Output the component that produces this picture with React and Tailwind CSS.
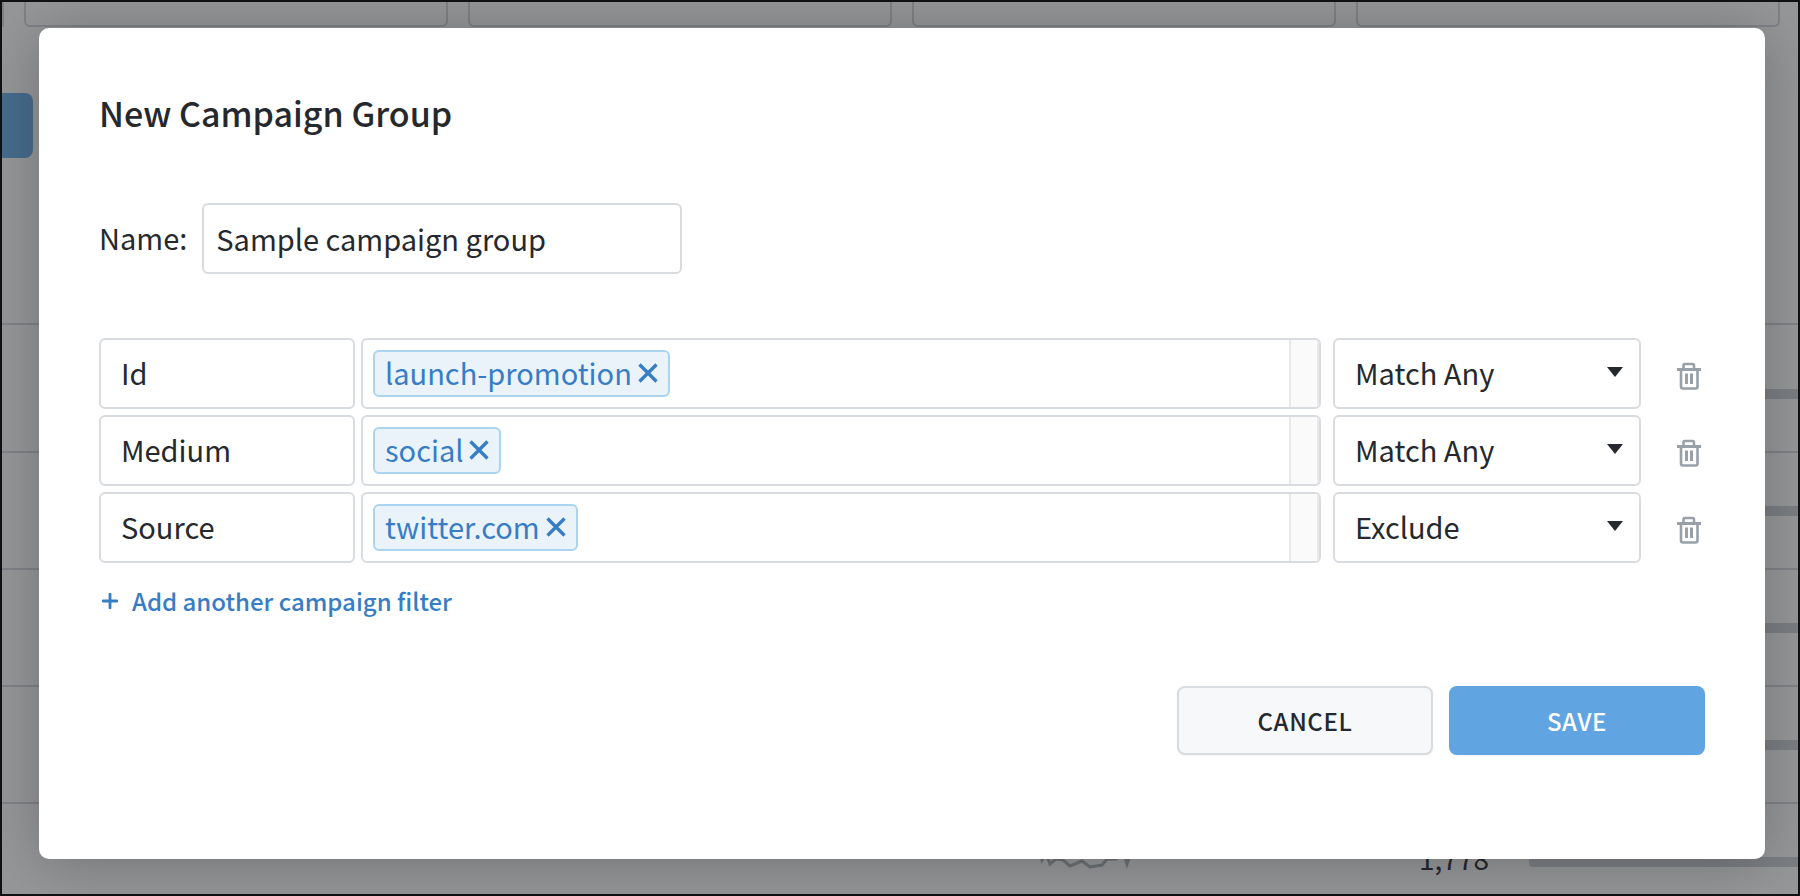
import React, { useState } from 'react';

const INITIAL_FILTERS = [
    { id: 1, field: 'Id', tags: ['launch-promotion'], match: 'Match Any' },
    { id: 2, field: 'Medium', tags: ['social'], match: 'Match Any' },
    { id: 3, field: 'Source', tags: ['twitter.com'], match: 'Exclude' }
];

const MATCH_OPTIONS = ['Match Any', 'Match All', 'Exclude'];

function CloseIcon() {
    return (
        <svg width="20" height="20" viewBox="0 0 20 20" fill="none" stroke="currentColor" strokeWidth="3.3" aria-hidden="true">
            <path d="M1.5 1.5 18.5 18.5M18.5 1.5 1.5 18.5" />
        </svg>
    );
}

function PlusIcon() {
    return (
        <svg width="16" height="16" viewBox="0 0 16 16" fill="none" stroke="currentColor" strokeWidth="2.8" strokeLinecap="round" aria-hidden="true">
            <path d="M8 1V15M1 8H15" />
        </svg>
    );
}

function TrashIcon() {
    return (
        <svg width="24" height="28" viewBox="0 0 24 28" fill="none" stroke="currentColor" strokeWidth="2.6" aria-hidden="true">
            <path d="M0 7.5H24" strokeWidth="3" />
            <path d="M6.5 7V3.5Q6.5 2 8 2H15.5Q17 2 17 3.5V7" />
            <path d="M4 7V24.5Q4 26.5 6 26.5H18.5Q20.5 26.5 20.5 24.5V7" />
            <path d="M9.5 11.5V22M14.5 11.5V22" strokeWidth="3" />
        </svg>
    );
}

// Dimmed report page behind the dialog
function ReportBackdrop() {
    return (
        <div aria-hidden="true" className="col-start-1 row-start-1 flex h-0 min-h-full flex-col overflow-hidden">
            <div className="-mr-1 flex shrink-0 gap-5">
                <div className="h-[25px] w-0.5 border-r-2 border-[#808287]" />
                <div className="grid h-[25px] flex-1 grid-cols-4 gap-5 pr-[22px]">
                    {[0, 1, 2, 3].map(i => (
                        <div key={i} className="rounded-b-md border-2 border-t-0 border-[#808287]" />
                    ))}
                </div>
            </div>
            <div className="mt-[66px] h-[65px] w-[31px] shrink-0 rounded-r-lg bg-[#476c8d]" />
            <div className="mt-[165px] flex shrink-0 flex-col">
                {[0, 1, 2, 3, 4].map(i => (
                    <div
                        key={i}
                        className="flex h-[117px] items-center justify-end border-t-2 border-[#808287] first:h-[128px] first:pt-[11px]"
                    >
                        {i === 4 && (
                            <>
                                <svg width="92" height="24" viewBox="0 0 92 24" fill="none" stroke="#6b7173" strokeWidth="3" className="mr-[287px]">
                                    <path d="M0 2 2 10 6 3 10 14 16 9 23 10 30 16 42 11 50 17 62 15 67 9 76 9 83 1 87 14 92 0" />
                                </svg>
                                <span className="mr-10 pb-2 text-[28px] leading-9">1,778</span>
                            </>
                        )}
                        <div className="h-2.5 w-[269px] rounded-l-sm bg-[#7b7f84]" />
                    </div>
                ))}
            </div>
        </div>
    );
}

function Tag({ label, onRemove }) {
    return (
        <span className="flex h-[47px] items-center gap-1.5 rounded-md border-2 border-[#aad4f2] bg-[#ebf3fa] px-2.5 pb-0.5 text-[#377dc6]">
            {label}
            <button type="button" onClick={onRemove} aria-label={`Remove ${label}`} className="cursor-pointer">
                <CloseIcon />
            </button>
        </span>
    );
}

function FilterRow({ filter, onChange, onRemove }) {
    const removeTag = (tag) => onChange({ ...filter, tags: filter.tags.filter(t => t !== tag) });

    return (
        <div className="flex h-[71px]">
            <input
                type="text"
                aria-label="Field"
                value={filter.field}
                onChange={e => onChange({ ...filter, field: e.target.value })}
                className="w-64 rounded-md border-2 border-[#d8dce1] pb-0.5 pl-5 outline-none"
            />
            <div className="ml-1.5 flex min-w-0 flex-1 overflow-hidden rounded-md border-2 border-[#d8dce1]">
                <div className="flex min-w-0 flex-1 items-center gap-2 pl-2.5">
                    {filter.tags.map(tag => (
                        <Tag key={tag} label={tag} onRemove={() => removeTag(tag)} />
                    ))}
                    <input type="text" aria-label={`${filter.field} values`} className="min-w-0 flex-1 outline-none" />
                </div>
                <div className="w-[30px] border-x-2 border-[#e8e8e8] bg-[#fafafa]" />
            </div>
            <div className="ml-3 grid w-[308px] items-center">
                <select
                    aria-label={`${filter.field} match`}
                    value={filter.match}
                    onChange={e => onChange({ ...filter, match: e.target.value })}
                    className="col-start-1 row-start-1 h-full w-full appearance-none rounded-md border-2 border-[#d8dce1] bg-white pb-0.5 pl-5 outline-none"
                >
                    {MATCH_OPTIONS.map(option => (
                        <option key={option}>{option}</option>
                    ))}
                </select>
                <svg width="16" height="10" viewBox="0 0 16 10" fill="currentColor" aria-hidden="true" className="pointer-events-none col-start-1 row-start-1 mr-[18px] mb-1 justify-self-end">
                    <path d="M0 0H16L8 10Z" />
                </svg>
            </div>
            <button
                type="button"
                onClick={onRemove}
                aria-label={`Delete ${filter.field} filter`}
                className="flex w-16 cursor-pointer items-center justify-end pt-1 pr-1 text-[#98a0a8]"
            >
                <TrashIcon />
            </button>
        </div>
    );
}

export default function App() {
    const [name, setName] = useState('Sample campaign group');
    const [filters, setFilters] = useState(INITIAL_FILTERS);

    const updateFilter = (next) => setFilters(filters.map(f => (f.id === next.id ? next : f)));
    const removeFilter = (id) => setFilters(filters.filter(f => f.id !== id));
    const addFilter = () => setFilters([...filters, { id: Date.now(), field: '', tags: [], match: 'Match Any' }]);

    return (
        <div className="grid min-h-screen overflow-hidden border-2 border-[#101112] bg-[#969799] font-['Noto_Sans_CJK_JP',sans-serif] text-[29px] text-[#25282d]">
            <ReportBackdrop />

            <div
                role="dialog"
                aria-labelledby="dialog-title"
                className="z-10 col-start-1 row-start-1 mt-[26px] mr-[33px] mb-[35px] ml-[37px] rounded-[10px] bg-white px-[60px] pt-15 shadow-[0_4px_60px_rgba(0,0,0,0.25)]"
            >
                <h1 id="dialog-title" className="text-[34px] leading-[49px] font-medium">New Campaign Group</h1>

                <div className="mt-[66px] flex items-center gap-[15px]">
                    <label htmlFor="group-name" className="pb-0.5">Name:</label>
                    <input
                        id="group-name"
                        type="text"
                        value={name}
                        onChange={e => setName(e.target.value)}
                        className="h-[71px] w-[480px] rounded-md border-2 border-[#d8dce1] px-3 pb-0.5 outline-none"
                    />
                </div>

                <div className="mt-16 flex flex-col gap-1.5">
                    {filters.map(filter => (
                        <FilterRow
                            key={filter.id}
                            filter={filter}
                            onChange={updateFilter}
                            onRemove={() => removeFilter(filter.id)}
                        />
                    ))}
                </div>

                <button
                    type="button"
                    onClick={addFilter}
                    className="mt-5 ml-[3px] flex cursor-pointer items-center gap-3.5 text-2xl leading-9 font-medium text-[#377dc6]"
                >
                    <PlusIcon />
                    Add another campaign filter
                </button>

                <div className="mt-[67px] flex justify-end gap-4">
                    <button type="button" className="h-[69px] w-64 cursor-pointer rounded-lg border-2 border-[#d8dce1] bg-[#f7f8fa] text-2xl font-medium tracking-wide shadow-xs">
                        CANCEL
                    </button>
                    <button type="button" className="h-[69px] w-64 cursor-pointer rounded-lg bg-[#60a5e1] text-2xl font-medium tracking-wide text-white shadow-xs">
                        SAVE
                    </button>
                </div>
            </div>
        </div>
    );
}
